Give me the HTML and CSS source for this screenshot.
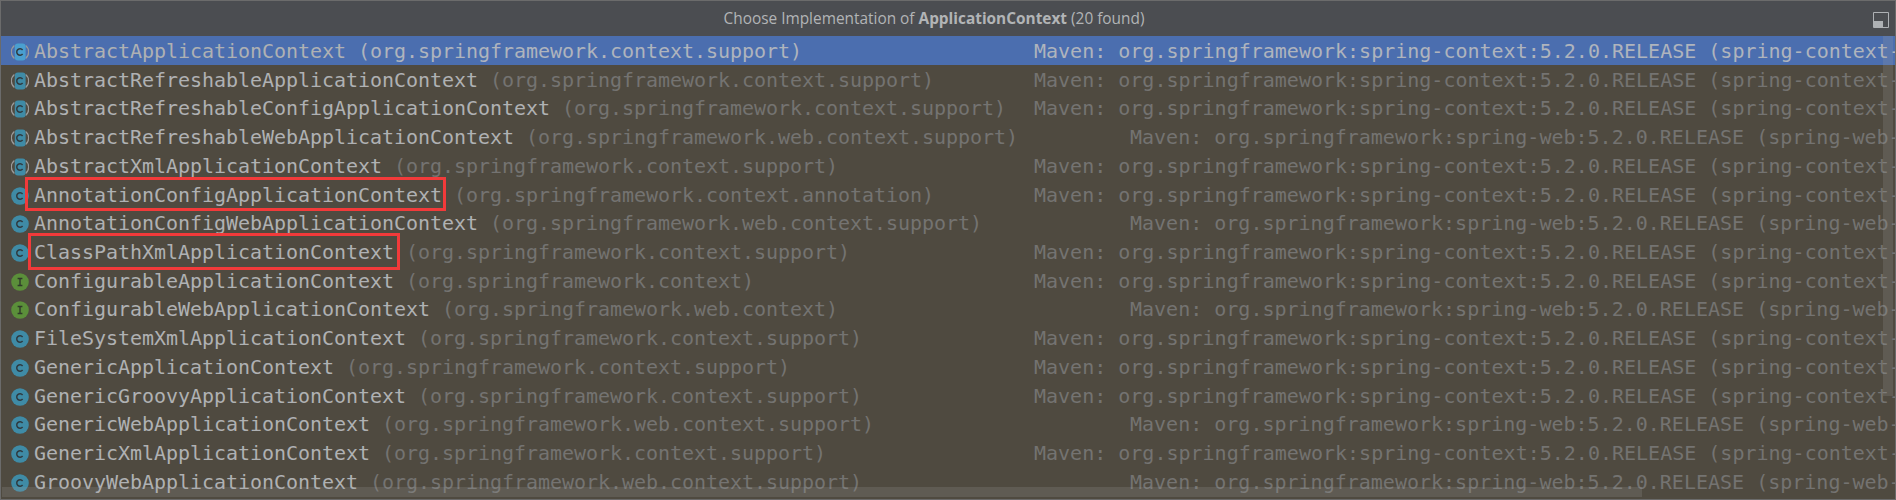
FILE: index.html
```html
<!DOCTYPE html>
<html lang="en">
<head>
<meta charset="utf-8">
<title>Choose Implementation</title>
<link rel="stylesheet" href="styles.css">
</head>
<body>
<main class="popup">
  <header class="title">
    <span>Choose Implementation of <b>ApplicationContext</b> (20 found)</span>
    <svg class="pin" width="16" height="16" viewBox="0 0 16 16"><path d="M.5.5h15v15H.5z" fill="none" stroke="#aeb1b4"/><path d="M1 9h9v6H1z" fill="#aeb1b4"/></svg>
  </header>
  <div class="list">
    <div class="row selected"><span class="name"><svg class="icon" viewBox="0 0 18 18"><use href="#abs"/></svg>AbstractApplicationContext <i>(org.springframework.context.support)</i></span><span class="loc">Maven: org.springframework:spring-context:5.2.0.RELEASE (spring-context-5.2.0.RELEASE.jar)</span></div>
    <div class="row"><span class="name"><svg class="icon" viewBox="0 0 18 18"><use href="#abs"/></svg>AbstractRefreshableApplicationContext <i>(org.springframework.context.support)</i></span><span class="loc">Maven: org.springframework:spring-context:5.2.0.RELEASE (spring-context-5.2.0.RELEASE.jar)</span></div>
    <div class="row"><span class="name"><svg class="icon" viewBox="0 0 18 18"><use href="#abs"/></svg>AbstractRefreshableConfigApplicationContext <i>(org.springframework.context.support)</i></span><span class="loc">Maven: org.springframework:spring-context:5.2.0.RELEASE (spring-context-5.2.0.RELEASE.jar)</span></div>
    <div class="row web"><span class="name"><svg class="icon" viewBox="0 0 18 18"><use href="#abs"/></svg>AbstractRefreshableWebApplicationContext <i>(org.springframework.web.context.support)</i></span><span class="loc">Maven: org.springframework:spring-web:5.2.0.RELEASE (spring-web-5.2.0.RELEASE.jar)</span></div>
    <div class="row"><span class="name"><svg class="icon" viewBox="0 0 18 18"><use href="#abs"/></svg>AbstractXmlApplicationContext <i>(org.springframework.context.support)</i></span><span class="loc">Maven: org.springframework:spring-context:5.2.0.RELEASE (spring-context-5.2.0.RELEASE.jar)</span></div>
    <div class="row"><span class="name"><svg class="icon" viewBox="0 0 18 18"><use href="#cls"/></svg><em class="mark mark-a">AnnotationConfigApplicationContext</em> <i>(org.springframework.context.annotation)</i></span><span class="loc">Maven: org.springframework:spring-context:5.2.0.RELEASE (spring-context-5.2.0.RELEASE.jar)</span></div>
    <div class="row web"><span class="name"><svg class="icon" viewBox="0 0 18 18"><use href="#cls"/></svg>AnnotationConfigWebApplicationContext <i>(org.springframework.web.context.support)</i></span><span class="loc">Maven: org.springframework:spring-web:5.2.0.RELEASE (spring-web-5.2.0.RELEASE.jar)</span></div>
    <div class="row"><span class="name"><svg class="icon" viewBox="0 0 18 18"><use href="#cls"/></svg><em class="mark mark-b">ClassPathXmlApplicationContext</em> <i>(org.springframework.context.support)</i></span><span class="loc">Maven: org.springframework:spring-context:5.2.0.RELEASE (spring-context-5.2.0.RELEASE.jar)</span></div>
    <div class="row"><span class="name"><svg class="icon" viewBox="0 0 18 18"><use href="#ifc"/></svg>ConfigurableApplicationContext <i>(org.springframework.context)</i></span><span class="loc">Maven: org.springframework:spring-context:5.2.0.RELEASE (spring-context-5.2.0.RELEASE.jar)</span></div>
    <div class="row web"><span class="name"><svg class="icon" viewBox="0 0 18 18"><use href="#ifc"/></svg>ConfigurableWebApplicationContext <i>(org.springframework.web.context)</i></span><span class="loc">Maven: org.springframework:spring-web:5.2.0.RELEASE (spring-web-5.2.0.RELEASE.jar)</span></div>
    <div class="row"><span class="name"><svg class="icon" viewBox="0 0 18 18"><use href="#cls"/></svg>FileSystemXmlApplicationContext <i>(org.springframework.context.support)</i></span><span class="loc">Maven: org.springframework:spring-context:5.2.0.RELEASE (spring-context-5.2.0.RELEASE.jar)</span></div>
    <div class="row"><span class="name"><svg class="icon" viewBox="0 0 18 18"><use href="#cls"/></svg>GenericApplicationContext <i>(org.springframework.context.support)</i></span><span class="loc">Maven: org.springframework:spring-context:5.2.0.RELEASE (spring-context-5.2.0.RELEASE.jar)</span></div>
    <div class="row"><span class="name"><svg class="icon" viewBox="0 0 18 18"><use href="#cls"/></svg>GenericGroovyApplicationContext <i>(org.springframework.context.support)</i></span><span class="loc">Maven: org.springframework:spring-context:5.2.0.RELEASE (spring-context-5.2.0.RELEASE.jar)</span></div>
    <div class="row web"><span class="name"><svg class="icon" viewBox="0 0 18 18"><use href="#cls"/></svg>GenericWebApplicationContext <i>(org.springframework.web.context.support)</i></span><span class="loc">Maven: org.springframework:spring-web:5.2.0.RELEASE (spring-web-5.2.0.RELEASE.jar)</span></div>
    <div class="row"><span class="name"><svg class="icon" viewBox="0 0 18 18"><use href="#cls"/></svg>GenericXmlApplicationContext <i>(org.springframework.context.support)</i></span><span class="loc">Maven: org.springframework:spring-context:5.2.0.RELEASE (spring-context-5.2.0.RELEASE.jar)</span></div>
    <div class="row web"><span class="name"><svg class="icon" viewBox="0 0 18 18"><use href="#cls"/></svg>GroovyWebApplicationContext <i>(org.springframework.web.context.support)</i></span><span class="loc">Maven: org.springframework:spring-web:5.2.0.RELEASE (spring-web-5.2.0.RELEASE.jar)</span></div>
    <div class="vbar"></div>
    <div class="hbar"></div>
  </div>
</main>
<svg class="defs" width="0" height="0">
  <defs>
    <symbol id="cls" viewBox="0 0 18 18"><circle cx="9" cy="9" r="8.8" fill="var(--badge, #3f8ba6)"/><path d="M11.6 6.9A3.3 3.3 0 1 0 11.6 11.1" fill="none" stroke="#2f3a40" stroke-width="1.5"/></symbol>
    <symbol id="abs" viewBox="0 0 18 18"><path d="M3.4 2.6A8.2 8.2 0 0 0 3.4 15.4M14.6 2.6A8.2 8.2 0 0 1 14.6 15.4" fill="none" stroke="#9a9a9a" stroke-width="1.3"/><rect x="3.8" y="0.4" width="10.8" height="17.2" rx="3" fill="var(--badge, #3f8ba6)"/><path d="M11.6 6.9A3.3 3.3 0 1 0 11.6 11.1" fill="none" stroke="#2f3a40" stroke-width="1.5"/></symbol>
    <symbol id="ifc" viewBox="0 0 18 18"><circle cx="9" cy="9" r="8.8" fill="#5b8f3a"/><path d="M6.6 5.5h4.8M9 5.5v7M6.6 12.5h4.8" fill="none" stroke="#2f3a2a" stroke-width="1.4"/></symbol>
  </defs>
</svg>
</body>
</html>
```
FILE: styles.css
```css
html, body {
  margin: 0;
  height: 500px;
  overflow: hidden;
  background: #4f4a40;
}
.defs {
  position: absolute;
}
.popup {
  display: flex;
  flex-direction: column;
  height: 500px;
  box-sizing: border-box;
  border: 1px solid #6b6b6b;
}
.title {
  flex: none;
  height: 35px;
  box-sizing: border-box;
  padding-right: 28px;
  display: flex;
  align-items: center;
  justify-content: center;
  position: relative;
  background: #4b4d51;
  color: #b2b4b6;
  font: 15.4px "Open Sans", "Liberation Sans", sans-serif;
}
.title b {
  font-weight: 700;
}
.pin {
  position: absolute;
  right: 6px;
  top: 11px;
}
.list {
  flex: 1;
  position: relative;
  overflow: hidden;
  background: #4f4a40;
  font: 20px/30px "DejaVu Sans Mono", monospace;
}
.row {
  height: 28.72px;
  display: grid;
  grid-template-columns: 1033px 1fr;
  white-space: nowrap;
  color: #afb1b3;
}
.row.web {
  grid-template-columns: 1129px 1fr;
}
.row.selected {
  --badge: #4a9fd0;
  background: #4b6eaf;
}
.name {
  display: block;
  padding-left: 10px;
  white-space: pre;
  letter-spacing: -0.04px;
}
.icon {
  width: 18px;
  height: 18px;
  margin-right: 5px;
  vertical-align: -3px;
}
.name i,
.loc {
  font-style: normal;
  color: #747371;
}
.selected .name i,
.selected .loc {
  color: #afb4bd;
}
.mark {
  font-style: normal;
  position: relative;
}
.mark::after {
  content: "";
  position: absolute;
  border: 3px solid #f23a3a;
  box-sizing: border-box;
  pointer-events: none;
}
.mark-a::after {
  top: -6px;
  height: 34px;
  left: -9px;
  right: -4px;
}
.mark-b::after {
  top: -7px;
  height: 37px;
  left: -6px;
  right: -6px;
}
.vbar {
  position: absolute;
  right: 2px;
  top: 0;
  width: 10px;
  height: 360px;
  background: rgba(160, 160, 160, 0.2);
}
.hbar {
  position: absolute;
  left: 1px;
  bottom: 2px;
  width: 1640px;
  height: 10px;
  background: rgba(160, 160, 160, 0.2);
}
```
